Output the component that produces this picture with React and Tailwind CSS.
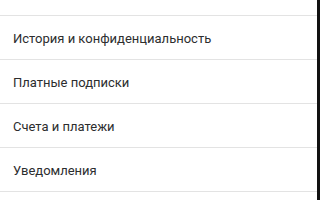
export default function App() {
  const rows = [
    "История и конфиденциальность",
    "Платные подписки",
    "Счета и платежи",
    "Уведомления",
    "Помощь",
  ];
  return (
    <div className="w-[320px] h-[200px] overflow-hidden bg-white flex">
      <div className="flex-1 flex flex-col mt-[-28px]" style={{ fontFamily: "Roboto, 'Liberation Sans', sans-serif" }}>
        <div className="h-[44px] shrink-0 border-b border-[#e3e3e3] flex items-center pl-[13px] pb-[4px] text-[13px] text-[#2c2d2e]">
          Приложения и устройства
        </div>
        {rows.map((r) => (
          <div key={r} className="h-[44px] shrink-0 border-b border-[#e3e3e3] flex items-center pl-[13px] pt-[2px] text-[13px] text-[#2c2d2e]">
            {r}
          </div>
        ))}
      </div>
      <div className="w-[3px] bg-[#111111]" />
    </div>
  );
}
